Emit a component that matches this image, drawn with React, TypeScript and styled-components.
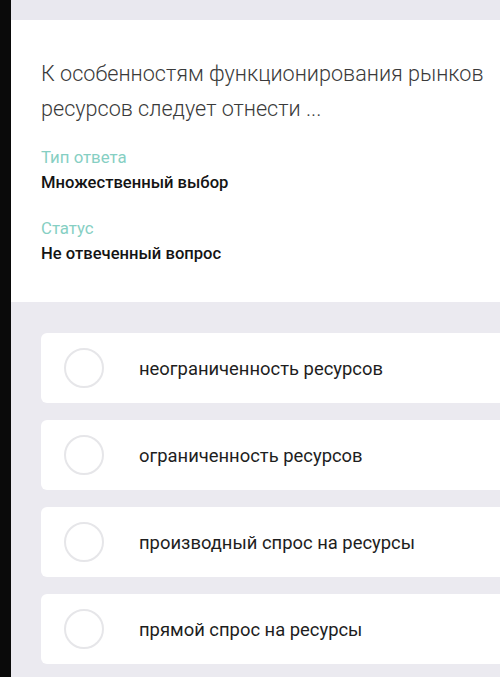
import styled, { createGlobalStyle } from 'styled-components'

const GlobalStyle = createGlobalStyle`
  * {
    margin: 0;
    padding: 0;
    box-sizing: border-box;
  }
  body {
    font-family: Roboto, "Noto Sans", sans-serif;
    background: #ebeaf0;
    overflow: hidden;
  }
`

const Screen = styled.div`
  display: flex;
  width: 500px;
  height: 677px;
  background: #ebeaf0;
`

const Edge = styled.div`
  width: 11px;
  flex-shrink: 0;
  background: #0a0a0a;
`

const Main = styled.div`
  flex: 1;
  display: flex;
  flex-direction: column;
  min-width: 0;
`

const TopStrip = styled.div`
  height: 20px;
  flex-shrink: 0;
  background: #e9e8ef;
`

const QuestionCard = styled.section`
  height: 282px;
  background: #fff;
  padding: 36px 10px 0 30px;
`

const Question = styled.h1`
  font-size: 21.6px;
  font-weight: 300;
  line-height: 35px;
  color: #3a3a3a;
`

const Meta = styled.div`
  margin-top: ${({ $first }: { $first?: boolean }) => ($first ? '21px' : '24px')};
`

const MetaLabel = styled.div`
  font-size: 16.8px;
  line-height: 20px;
  color: #86cfc3;
`

const MetaValue = styled.div`
  margin-top: 5px;
  font-size: 16.6px;
  font-weight: 500;
  line-height: 22px;
  color: #141414;
`

const Options = styled.div`
  display: flex;
  flex-direction: column;
  gap: 17px;
  padding: 31px 0 0 30px;
`

const Option = styled.div`
  display: flex;
  align-items: center;
  height: 70px;
  background: #fff;
  border-radius: 6px 0 0 6px;
  padding-left: 23px;
`

const Radio = styled.span`
  width: 40px;
  height: 40px;
  flex-shrink: 0;
  border-radius: 50%;
  border: 2px solid #e6e6e9;
`

const OptionText = styled.span`
  margin-left: 35px;
  font-size: 18.4px;
  color: #1e1e1e;
`

const answers = [
  'неограниченность ресурсов',
  'ограниченность ресурсов',
  'производный спрос на ресурсы',
  'прямой спрос на ресурсы',
]

export default function App() {
  return (
    <Screen>
      <GlobalStyle />
      <Edge />
      <Main>
        <TopStrip />
        <QuestionCard>
          <Question>К особенностям функционирования рынков ресурсов следует отнести ...</Question>
          <Meta $first>
            <MetaLabel>Тип ответа</MetaLabel>
            <MetaValue>Множественный выбор</MetaValue>
          </Meta>
          <Meta>
            <MetaLabel>Статус</MetaLabel>
            <MetaValue>Не отвеченный вопрос</MetaValue>
          </Meta>
        </QuestionCard>
        <Options>
          {answers.map((a) => (
            <Option key={a}>
              <Radio />
              <OptionText>{a}</OptionText>
            </Option>
          ))}
        </Options>
      </Main>
    </Screen>
  )
}
